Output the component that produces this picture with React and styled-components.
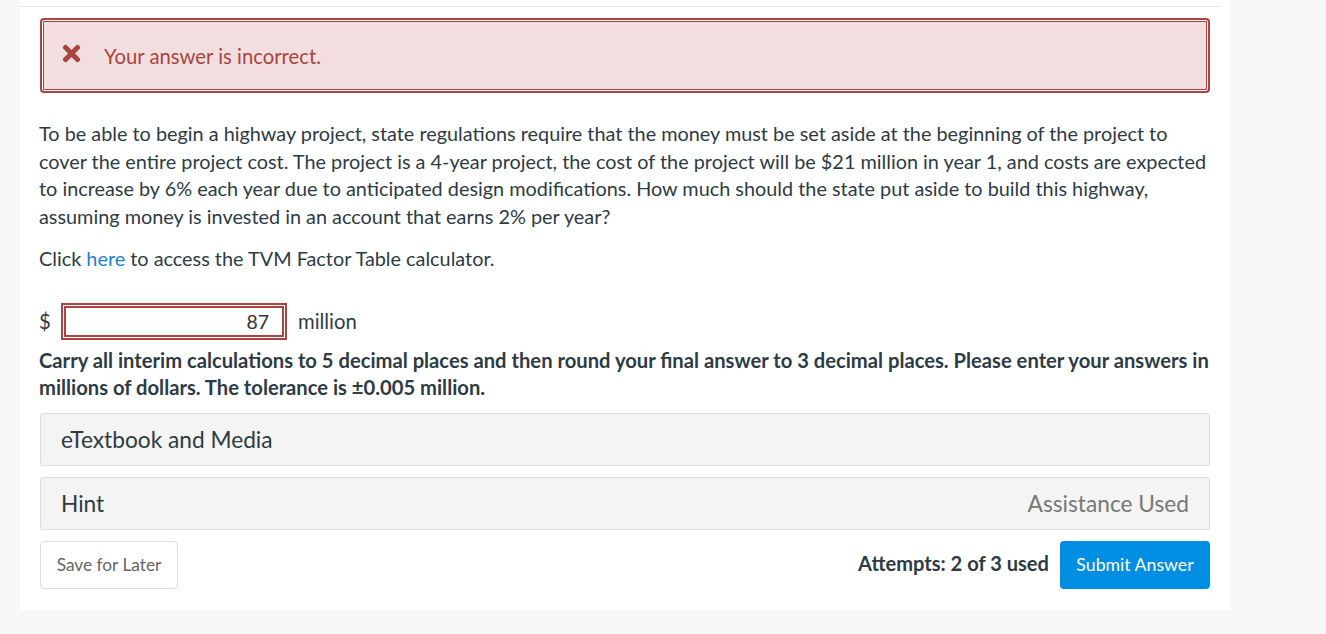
import React from 'react'
import styled, { createGlobalStyle } from 'styled-components';

const GlobalStyle = createGlobalStyle`
    html, body {
        margin: 0;
        padding: 0;
        background-color: #f8f8f8;
        font-family: Lato, "Open Sans", "Liberation Sans", sans-serif;
        color: #2d3b45;
    }
`;

const Page = styled.div`
    height: 634px;
    padding-left: 20px;
    box-sizing: border-box;
`;

const Panel = styled.div`
    width: 1210px;
    background-color: #fff;
    padding: 0 20px 21px 20px;
    box-sizing: border-box;
`;

const TopRule = styled.div`
    height: 6px;
    margin: 0 -10px 11px -20px;
    border-bottom: 1px solid #e8e8e8;
`;

const Alert = styled.div`
    display: flex;
    align-items: center;
    height: 75px;
    box-sizing: border-box;
    padding-left: 20px;
    background-color: #f2dede;
    border: 2px solid #a94442;
    border-radius: 4px;
    box-shadow: inset 0 0 0 1px #fff, inset 0 0 0 2px #a94442;
    color: #a94442;
    font-size: 20.3px;
`;

const AlertIcon = styled.svg`
    width: 19px;
    height: 19px;
    margin-right: 23px;
    margin-top: -4px;
`;

const Question = styled.p`
    margin: 27px 0 0 -1px;
    font-size: 19.85px;
    line-height: 27.6px;
    white-space: nowrap;
`;

const ClickLine = styled.p`
    margin: 15px 0 0 -1px;
    font-size: 19.85px;
    line-height: 27.6px;
`;

const Link = styled.a`
    color: #1a7fd6;
    text-decoration: none;
`;

const AnswerRow = styled.div`
    display: flex;
    align-items: center;
    margin-top: 30px;
    font-size: 20.3px;
`;

const Dollar = styled.span`
    width: 22px;
    margin-left: -1px;
`;

const AnswerInput = styled.input`
    width: 226px;
    height: 37px;
    box-sizing: border-box;
    border: 2px solid #a94442;
    box-shadow: inset 0 0 0 1px #fff, inset 0 0 0 3px #a94442;
    padding: 0 16px 0 8px;
    text-align: right;
    font-family: Lato, "Liberation Sans", sans-serif;
    font-size: 19.5px;
    color: #333;
    outline: none;
`;

const Unit = styled.span`
    margin-left: 11px;
    margin-top: -1px;
`;

const Note = styled.p`
    margin: 7px 0 0 -1px;
    font-size: 20.2px;
    font-weight: 700;
    line-height: 27px;
    white-space: nowrap;
`;

const Accordion = styled.div`
    display: flex;
    justify-content: space-between;
    align-items: center;
    height: 53px;
    box-sizing: border-box;
    margin-top: ${props => props.first ? "12px" : "11px"};
    padding: 0 20px;
    background-color: #f4f4f4;
    border: 1px solid #ddd;
    border-radius: 3px;
    font-size: 22.7px;
    color: #2d3b45;
`;

const Assist = styled.span`
    color: #777;
`;

const Footer = styled.div`
    display: flex;
    align-items: center;
    justify-content: space-between;
    margin-top: 11px;
`;

const SaveButton = styled.button`
    width: 138px;
    height: 48px;
    background-color: #fff;
    border: 1px solid #ddd;
    border-radius: 4px;
    font-family: Lato, "Liberation Sans", sans-serif;
    font-size: 17.3px;
    color: #666;
`;

const Right = styled.div`
    display: flex;
    align-items: center;
`;

const Attempts = styled.span`
    font-size: 20.1px;
    font-weight: 700;
    margin-right: 11px;
    margin-top: -3px;
`;

const SubmitButton = styled.button`
    width: 150px;
    height: 48px;
    background-color: #008ee2;
    border: none;
    border-radius: 4px;
    font-family: Lato, "Liberation Sans", sans-serif;
    font-size: 17.7px;
    color: #fff;
`;

const App = () => (
    <Page>
        <GlobalStyle />
        <Panel>
            <TopRule />
            <Alert>
                <AlertIcon viewBox="0 0 19 19">
                    <path d="M3.5 3.5 L15.5 15.5 M15.5 3.5 L3.5 15.5" stroke="#a94442" strokeWidth="5" strokeLinecap="round" />
                </AlertIcon>
                Your answer is incorrect.
            </Alert>
            <Question>
                To be able to begin a highway project, state regulations require that the money must be set aside at the beginning of the project to<br />
                cover the entire project cost. The project is a 4-year project, the cost of the project will be $21 million in year 1, and costs are expected<br />
                to increase by 6% each year due to anticipated design modifications. How much should the state put aside to build this highway,<br />
                assuming money is invested in an account that earns 2% per year?
            </Question>
            <ClickLine>Click <Link href="#">here</Link> to access the TVM Factor Table calculator.</ClickLine>
            <AnswerRow>
                <Dollar>$</Dollar>
                <AnswerInput defaultValue="87" />
                <Unit>million</Unit>
            </AnswerRow>
            <Note>
                Carry all interim calculations to 5 decimal places and then round your final answer to 3 decimal places. Please enter your answers in<br />
                millions of dollars. The tolerance is ±0.005 million.
            </Note>
            <Accordion first>eTextbook and Media</Accordion>
            <Accordion>
                Hint
                <Assist>Assistance Used</Assist>
            </Accordion>
            <Footer>
                <SaveButton>Save for Later</SaveButton>
                <Right>
                    <Attempts>Attempts: 2 of 3 used</Attempts>
                    <SubmitButton>Submit Answer</SubmitButton>
                </Right>
            </Footer>
        </Panel>
    </Page>
);

export default App;
